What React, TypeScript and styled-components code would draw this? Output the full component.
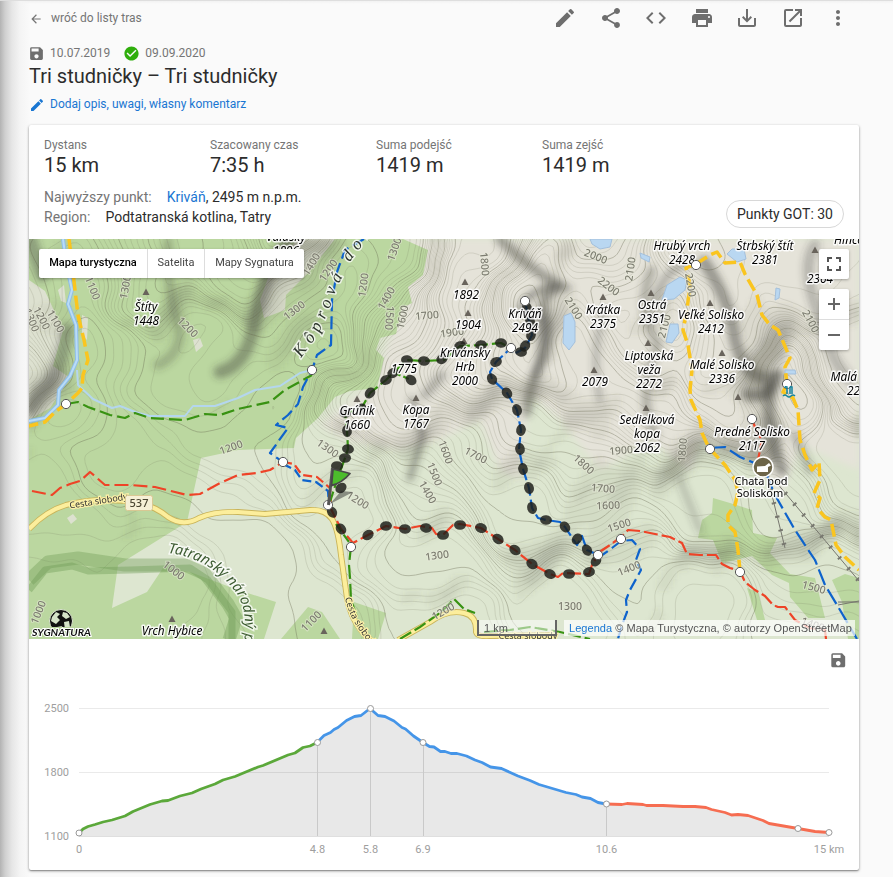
import React from "react";
import styled, { createGlobalStyle } from "styled-components";
import {
  MdArrowBack,
  MdCheckCircle,
  MdCode,
  MdEdit,
  MdMoreVert,
  MdOpenInNew,
  MdPrint,
  MdSave,
  MdSaveAlt,
  MdShare,
} from "react-icons/md";

const GlobalStyle = createGlobalStyle`
  * {
    box-sizing: border-box;
  }
  body {
    margin: 0;
    background: #fafafa;
    font-family: Roboto, sans-serif;
    color: #2c2c2c;
    overflow: hidden;
  }
`;

const Page = styled.div`
  height: 877px;
  padding: 5px 34px 0 29px;
  border-top: 1px solid #dedede;
  background: linear-gradient(
      90deg,
      #b3b3b3 0,
      #cfcfcf 5px,
      #e6e6e6 12px,
      #f4f4f4 20px,
      rgba(250, 250, 250, 0) 30px
    ),
    linear-gradient(#f2f2f2, #fafafa 3px);
`;

const TopBar = styled.header`
  display: flex;
  align-items: center;
  justify-content: space-between;
  height: 24px;
`;

const BackLink = styled.a`
  display: flex;
  align-items: center;
  gap: 8px;
  font-size: 12px;
  color: #757575;

  svg {
    font-size: 14px;
    position: relative;
    top: 1px;
  }
`;

const Actions = styled.div`
  display: flex;
  gap: 21.5px;
  margin-right: 9px;
  font-size: 24px;
  color: #6e6e6e;

  svg {
    display: block;
  }
`;

const Dates = styled.div`
  display: flex;
  align-items: center;
  height: 20px;
  margin-top: 13px;
  margin-left: -1px;
  font-size: 12px;
  color: #757575;
`;

const DateItem = styled.span<{ iconColor: string }>`
  display: flex;
  align-items: center;
  gap: 5px;
  margin-right: 13px;

  svg {
    font-size: 17px;
    color: ${(props) => props.iconColor};
  }
`;

const RouteTitle = styled.h1`
  margin: 1px 0 0;
  font-size: 20px;
  font-weight: 400;
  line-height: 24px;
`;

const NoteLink = styled.a`
  display: flex;
  align-items: center;
  gap: 5px;
  height: 20px;
  margin-top: 6px;
  font-size: 12px;
  color: #1976d2;

  svg {
    font-size: 16px;
    position: relative;
    top: 1px;
  }
`;

const Card = styled.section`
  display: flex;
  flex-direction: column;
  width: 830px;
  height: 745px;
  margin-top: 11px;
  background: #fff;
  border-radius: 2px;
  box-shadow: 0 1px 3px rgba(0, 0, 0, 0.4), 0 1px 1px rgba(0, 0, 0, 0.2);
`;

const Summary = styled.div`
  height: 114px;
  padding: 11px 15px 0;
`;

const Stats = styled.div`
  display: grid;
  grid-template-columns: repeat(5, 166px);
`;

const StatLabel = styled.div`
  font-size: 12px;
  line-height: 18px;
  color: #757575;
`;

const StatValue = styled.div`
  font-size: 20px;
  line-height: 23px;
`;

const Details = styled.div`
  display: flex;
  justify-content: space-between;
  align-items: flex-end;
  margin-top: 10px;
`;

const Detail = styled.div`
  font-size: 14px;
  line-height: 20px;
`;

const DetailLabel = styled.span`
  color: #757575;
  margin-right: 15px;
`;

const PeakLink = styled.a`
  color: #1976d2;
`;

const Chip = styled.div`
  height: 28px;
  padding: 0 10px;
  margin-bottom: -1px;
  border: 1px solid #d8d8d8;
  border-radius: 14px;
  font-size: 14px;
  line-height: 26px;
`;

const MapFrame = styled.div`
  position: relative;
  height: 400px;
  overflow: hidden;
`;

const Drawing = styled.svg`
  display: block;
`;

const MapTypes = styled.div`
  position: absolute;
  left: 10px;
  top: 10px;
  display: flex;
  height: 29px;
  border-radius: 2px;
  background: #fff;
  box-shadow: 0 1px 3px rgba(0, 0, 0, 0.3);
`;

const MapType = styled.div<{ width: number; active?: boolean }>`
  width: ${(props) => props.width}px;
  font-size: 11px;
  font-weight: ${(props) => (props.active ? 500 : 400)};
  color: ${(props) => (props.active ? "#000" : "#444")};
  line-height: 27px;
  text-align: center;

  & + & {
    border-left: 1px solid #ddd;
  }
`;

const MapButtons = styled.div`
  position: absolute;
  right: 10px;
  top: 10px;
  display: flex;
  flex-direction: column;
  gap: 10px;
`;

const ButtonStack = styled.div`
  width: 30px;
  border-radius: 2px;
  background: #fff;
  box-shadow: 0 1px 3px rgba(0, 0, 0, 0.3);
`;

const MapButton = styled.div`
  display: flex;
  align-items: center;
  justify-content: center;
  height: 30px;

  & + & {
    height: 31px;
    border-top: 1px solid #ddd;
  }
`;

const MapFooter = styled.div`
  position: absolute;
  right: 4px;
  bottom: 3px;
  display: flex;
  gap: 7px;
  font-family: "Liberation Sans", Arial, sans-serif;
  font-size: 11px;
  line-height: 16px;
  color: #555;
`;

const Scale = styled.div`
  width: 80px;
  height: 16px;
  padding-left: 5px;
  border: 2px solid #666;
  border-top: 0;
  background: rgba(255, 255, 255, 0.5);
`;

const Credits = styled.div`
  height: 16px;
  width: 291px;
  padding-left: 5px;
  background: rgba(255, 255, 255, 0.7);
  letter-spacing: 0.05px;
  white-space: nowrap;
`;

const Profile = styled.div`
  display: flex;
  flex-direction: column;
  height: 231px;
`;

const ProfileHeader = styled.div`
  display: flex;
  justify-content: flex-end;
  height: 40px;
  padding: 12px 12px 0 0;
  font-size: 18.5px;
  color: #6e6e6e;
`;

type Point = [number, number];

const parse = (line: string): Point[] =>
  line.split(" ").map((pair) => pair.split(",").map(Number) as Point);

// ---- terrain ---------------------------------------------------------

const LEFT = 29;
const TOP = 239;
const STEP = 4;
const COLS = Math.ceil(830 / STEP) + 1;
const ROWS = Math.ceil(400 / STEP) + 1;

// x, y, metres above sea level
const elevations = [
  [147, 290, 1450], [93, 290, 1100], [125, 288, 1300], [188, 328, 1200],
  [32, 320, 1350], [44, 318, 1200], [56, 320, 1100], [75, 340, 985],
  [29, 370, 1450], [66, 404, 1000], [200, 260, 1500], [240, 270, 1560],
  [287, 245, 1896], [311, 265, 1400], [328, 270, 1200], [295, 310, 1300],
  [225, 370, 1260], [330, 340, 1110], [363, 285, 1200], [394, 253, 1300],
  [386, 298, 1400], [395, 318, 1530], [427, 315, 1700], [465, 285, 1892],
  [468, 318, 1904], [486, 265, 1800], [522, 305, 2480], [545, 280, 2300],
  [540, 350, 2250], [505, 350, 2130], [455, 365, 2000], [358, 405, 1660],
  [416, 405, 1767], [404, 362, 1775], [596, 256, 2000], [630, 268, 2100],
  [609, 286, 2200], [575, 308, 2100], [568, 335, 1950], [603, 302, 2375],
  [594, 375, 2079], [651, 295, 2351], [649, 345, 2272], [646, 415, 2062],
  [710, 308, 2412], [722, 360, 2336], [738, 400, 2217], [765, 245, 2381],
  [690, 250, 2428], [675, 320, 1950], [785, 390, 1750], [820, 270, 2364],
  [850, 370, 2229], [814, 587, 1500], [810, 625, 1400], [618, 525, 1500],
  [628, 568, 1400], [568, 605, 1300], [608, 504, 1600], [603, 488, 1700],
  [584, 465, 1800], [621, 450, 1900], [475, 455, 1700], [448, 455, 1600],
  [435, 475, 1500], [428, 492, 1400], [437, 555, 1300], [358, 499, 1200],
  [231, 447, 1200], [328, 450, 1300], [310, 625, 1100], [173, 570, 1000],
  [37, 610, 1000], [450, 625, 1200], [45, 500, 1040], [200, 500, 1100],
  [100, 450, 1130], [120, 610, 1020], [250, 560, 1090], [700, 600, 1330],
  [700, 500, 1640], [780, 500, 1720], [840, 470, 1950], [520, 430, 1850],
  [520, 500, 1600], [110, 360, 1130], [160, 370, 1230], [270, 400, 1170],
];

const elevationAt = (x: number, y: number) => {
  const wx = x + 4 * Math.sin(y / 13 + x / 47) + 1.5 * Math.sin(y / 6 - x / 19);
  const wy = y + 4 * Math.sin(x / 15 - y / 53) + 1.5 * Math.cos(x / 7 + y / 17);
  let sum = 0;
  let weights = 0;
  for (const [px, py, h] of elevations) {
    const d = (px - wx) ** 2 + (py - wy) ** 2;
    const w = Math.exp(-d / 900) + 0.02 * Math.exp(-d / 6000) + 1e-7;
    sum += w * h;
    weights += w;
  }
  return sum / weights;
};

const grid: number[][] = [];
for (let r = 0; r < ROWS; r++) {
  grid.push([]);
  for (let c = 0; c < COLS; c++) {
    grid[r].push(elevationAt(LEFT + c * STEP, TOP + r * STEP));
  }
}

// marching squares, one path for all lines of the given interval
const contourPath = (interval: number, skip?: number) => {
  let d = "";
  for (let r = 0; r < ROWS - 1; r++) {
    for (let c = 0; c < COLS - 1; c++) {
      const x = LEFT + c * STEP;
      const y = TOP + r * STEP;
      const corners = [
        [x, y, grid[r][c]],
        [x + STEP, y, grid[r][c + 1]],
        [x + STEP, y + STEP, grid[r + 1][c + 1]],
        [x, y + STEP, grid[r + 1][c]],
      ];
      const heights = corners.map((corner) => corner[2]);
      const max = Math.max(...heights);
      let level = Math.ceil(Math.min(...heights) / interval) * interval;
      for (; level < max; level += interval) {
        if (skip && level % skip === 0) continue;
        const hits: string[] = [];
        for (let i = 0; i < 4; i++) {
          const a = corners[i];
          const b = corners[(i + 1) % 4];
          if (a[2] < level !== b[2] < level) {
            const t = (level - a[2]) / (b[2] - a[2]);
            const hx = a[0] + t * (b[0] - a[0]);
            const hy = a[1] + t * (b[1] - a[1]);
            hits.push(`${hx.toFixed(1)} ${hy.toFixed(1)}`);
          }
        }
        if (hits.length >= 2) d += `M${hits[0]}L${hits[1]}`;
      }
    }
  }
  return d;
};

const minorContours = contourPath(20, 100);
const majorContours = contourPath(100);

// slopes that face away from the north-west light
const shadeLevels = [12, 22, 34, 48, 62].map((limit) => {
  let d = "";
  for (let r = 0; r < ROWS - 1; r++) {
    for (let c = 0; c < COLS - 1; c++) {
      const fall = 2 * grid[r][c] - grid[r][c + 1] - grid[r + 1][c];
      if (fall > limit) {
        d += `M${LEFT + c * STEP} ${TOP + r * STEP}h${STEP}v${STEP}h-${STEP}z`;
      }
    }
  }
  return d;
});

const forests = [
  "29,239 403,239 428,250 423,275 408,287 412,303 402,308 396,334 380,338 376,350 384,358 377,388 350,391 335,397 318,418 296,438 294,448 238,450 201,458 187,522 118,565 112,608 147,592 163,568 190,572 238,590 276,602 264,639 29,639",
  "308,607 322,612 340,639 281,639",
  "354,602 386,613 378,639 352,639",
  "713,498 730,503 752,510 753,533 777,538 770,553 790,574 815,578 825,618 808,618 790,597 789,583 772,575 752,556 722,563 713,540 698,538 702,520 712,513",
  "747,588 758,592 765,620 757,620",
  "832,580 845,574 859,578 859,639 848,639 842,602",
];

const clearings = [
  "29,280 45,291 63,330 53,366 70,378 50,408 29,420",
  "260,300 272,267 298,239 335,239 309,272 286,295 285,310 264,318",
  "58,290 64,285 66,303 61,301",
  "82,315 88,318 87,340 82,335",
  "193,340 200,338 203,346 196,352",
  "67,518 73,514 77,519 71,524",
];

const ridges = [
  { d: "M500 239 Q530 270 562 287 Q538 295 545 315 Q553 340 540 365 Q530 385 527 412", w: 10, o: 0.42 },
  { d: "M558 286 Q530 288 520 310", w: 7, o: 0.45 },
  { d: "M540 315 Q548 340 535 375", w: 8, o: 0.35 },
  { d: "M290 239 Q265 270 255 320 Q248 365 220 372", w: 13, o: 0.42 },
  { d: "M168 242 Q166 290 180 330 Q180 355 158 365", w: 10, o: 0.26 },
  { d: "M30 239 L42 275", w: 14, o: 0.36 },
  { d: "M67 330 Q64 360 48 385 L29 408", w: 14, o: 0.36 },
  { d: "M412 400 L423 435 L410 478", w: 7, o: 0.42 },
  { d: "M425 395 L442 375", w: 9, o: 0.3 },
  { d: "M652 270 Q635 305 658 345 Q636 395 655 435", w: 9, o: 0.32 },
  { d: "M605 310 Q590 350 600 400", w: 7, o: 0.28 },
  { d: "M690 262 Q665 268 655 300", w: 8, o: 0.3 },
  { d: "M704 262 Q730 300 735 340 Q745 380 770 378 Q765 430 782 470", w: 12, o: 0.45 },
  { d: "M748 395 Q770 400 778 375", w: 12, o: 0.5 },
  { d: "M815 245 Q798 270 825 330 Q830 360 850 380", w: 11, o: 0.28 },
  { d: "M795 435 L810 470", w: 8, o: 0.32 },
  { d: "M680 480 L700 530", w: 8, o: 0.2 },
];

const lakes = [
  "564,316 571,313 575,322 575,342 569,350 563,343",
  "590,239 612,239 610,247 600,249 592,244",
  "662,300 667,285 680,277 687,280 685,290 674,299",
  "666,342 670,324 678,324 679,333 672,343",
  "727,254 732,249 744,249 746,259 737,262",
  "775,300 776,288 780,289 779,298",
  "785,370 795,370 796,374 785,374",
  "640,253 650,257 649,262 641,258",
];

type Trail = { color: string; width?: number; dash: string; points: string };

const yellow = "#fac51f";
const blue = "#0e63cc";
const red = "#ee4327";
const green = "#389212";

const trails: Trail[] = [
  { color: yellow, width: 3.5, dash: "14 5", points: "69,239 72,263 75,290 78,315 84,340 88,360 83,375 82,388 78,393 66,404 55,412 45,422 29,426" },
  { color: green, dash: "13 5", points: "66,404 78,402 88,407 110,415 125,418 135,413 150,418 185,420 205,414 220,415 238,409 270,402 285,390 312,375" },
  { color: blue, dash: "13 5", points: "364,239 345,250 337,272 332,300 331,345 317,355 312,370 303,387 298,404 288,415 276,425 288,428 270,453 283,462" },
  { color: blue, dash: "9 4", points: "283,464 295,470 302,480 316,482 328,491 329,505" },
  { color: red, dash: "14 5", points: "32,491 52,495 60,488 70,484 80,481 90,472 97,478 105,485 130,485 155,487 187,495 200,494 220,483 238,475 257,473 270,470 283,462" },
  { color: red, dash: "9 4", points: "283,462 294,464 302,475 317,477 330,488 331,505" },
  { color: green, dash: "14 4", points: "329,505 337,480 345,458 348,449 347,431 345,413 361,409 370,393 386,380 393,373 407,360 424,361 444,360 460,346 481,345 501,343 511,348" },
  { color: green, dash: "6 3", points: "395,373 411,380" },
  { color: blue, dash: "12 4", points: "525,301 529,320 532,335 525,348 514,354 511,348 496,362 490,372 492,379 507,393 517,410 521,430 519,449 523,469 529,488 532,508 538,518 546,520 560,522 565,527 577,545 582,536 587,550 598,555" },
  { color: red, dash: "14 4", points: "329,505 341,529 353,543 368,535 386,526 405,529 420,526 432,528 436,534 443,535 453,525 460,524 481,528 498,539 515,550 532,564 550,574 558,577 563,573 589,574 592,565 598,555" },
  { color: green, dash: "9 4", points: "336,524 349,542" },
  { color: red, dash: "14 4", points: "598,553 610,545 621,537 628,530 640,531 655,534 670,537 682,543 687,554 700,555 716,555 722,564 730,568 740,571 745,582 755,590 765,596 773,605 778,607 785,607 795,620 810,628 825,630 826,639" },
  { color: blue, dash: "12 5", points: "598,558 612,548 621,541 632,540 640,549 636,560 641,570 630,590 626,600 627,612 622,625 618,639" },
  { color: green, dash: "14 5", points: "351,546 349,565 350,578 351,600 358,620" },
  { color: green, dash: "13 4", points: "400,639 420,627 440,613 454,599 464,609 475,613" },
  { color: green, dash: "13 4", points: "484,632 510,630 530,627 560,632 590,639" },
  { color: blue, dash: "17 5", points: "709,448 725,447 740,457 752,462 764,468 775,495 795,530 815,560 825,585 840,610 857,639" },
  { color: red, dash: "9 3", points: "752,419 756,430 762,440 758,460" },
  { color: yellow, width: 3.5, dash: "13 5", points: "696,264 686,268 690,285 687,310 683,330 688,345 692,370 690,390 691,400 700,420 702,433 709,448 725,465 735,480 738,492 735,505 728,515 728,525 735,532 738,550 740,571" },
  { color: yellow, width: 3.5, dash: "13 5", points: "696,264 710,255 717,252 725,263 740,262 745,274 757,295 762,315 770,325 778,330 790,358 785,367 787,384" },
  { color: yellow, width: 3.5, dash: "13 5", points: "787,384 783,392 793,398 798,410 800,440 805,455 812,470 819,462 820,480 814,493 820,498 817,508 825,517 831,520 836,545 845,557 859,570" },
];

// x, y, tilt
const beads = [
  [348, 449, 10], [345, 458, 0], [337, 466, 0], [341, 488, -40], [332, 512, 60],
  [341, 529, 50], [368, 535, -35], [386, 526, -5], [405, 529, 5], [426, 528, 10],
  [443, 535, 0], [460, 525, 0], [481, 528, 15], [498, 539, 35], [515, 550, 35],
  [532, 564, 35], [550, 574, 25], [569, 574, 0], [589, 572, -15], [596, 561, -50],
  [587, 550, 60], [577, 539, -50], [565, 527, 50], [546, 520, 5], [532, 508, 70],
  [529, 488, 70], [523, 469, 80], [520, 449, 80], [521, 430, 100], [517, 410, 70],
  [507, 393, 50], [492, 379, 60], [496, 362, -20], [521, 352, 10], [525, 346, -55],
  [531, 335, 100], [530, 321, 70], [527, 308, 70], [501, 343, 5], [481, 345, -5],
  [460, 346, -20], [442, 359, -30], [424, 361, 5], [407, 360, 10], [411, 380, 40],
  [393, 373, -30], [386, 380, -20], [370, 393, -50], [361, 409, -50], [345, 413, 10],
  [347, 431, 80],
];

const junctions = [
  [66, 404], [312, 370], [283, 462], [351, 547], [511, 348], [525, 301],
  [598, 555], [621, 539], [696, 265], [787, 384], [752, 419], [710, 449], [740, 572],
];

// x, first baseline, lines
const placeNames: [number, number, string[]][] = [
  [146, 311, ["Štíty", "1448"]],
  [286, 241, ["Valušky", "1896"]],
  [466, 299, ["1892"]],
  [468, 329, ["1904"]],
  [404, 373, ["1775"]],
  [357, 415, ["Grúnik", "1660"]],
  [416, 414, ["Kopa", "1767"]],
  [465, 357, ["Krivánsky", "Hrb", "2000"]],
  [525, 318, ["Kriváň", "2494"]],
  [603, 314, ["Krátka", "2375"]],
  [595, 386, ["2079"]],
  [652, 309, ["Ostrá", "2351"]],
  [649, 360, ["Liptovská", "veža", "2272"]],
  [647, 424, ["Sedielková", "kopa", "2062"]],
  [682, 250, ["Hrubý vrch", "2428"]],
  [765, 250, ["Štrbský štít", "2381"]],
  [711, 319, ["Veľké Solisko", "2412"]],
  [722, 369, ["Malé Solisko", "2336"]],
  [752, 436, ["Predné Solisko", "2117"]],
  [855, 244, ["Hincova"]],
  [820, 283, ["2364"]],
  [860, 381, ["Malá Bašta", "2229"]],
  [172, 635, ["Vrch Hybice"]],
];

const summits = [
  [146, 292], [357, 399], [416, 398], [465, 282], [468, 313], [464, 341],
  [603, 297], [594, 370], [651, 293], [648, 343], [646, 408], [710, 303],
  [722, 353], [738, 397], [815, 250], [172, 619], [324, 631],
];

// x, y, rotation, text
const contourLabels: [number, number, number, string][] = [
  [93, 288, 68, "1100"], [125, 287, -80, "1300"], [188, 327, 45, "1200"],
  [32, 320, 68, "1300"], [42, 318, 62, "1200"], [56, 321, 60, "1100"],
  [311, 264, -58, "1400"], [328, 270, -55, "1200"], [294, 310, -38, "1300"],
  [363, 285, -82, "1200"], [394, 249, -70, "1300"], [386, 298, -60, "1400"],
  [390, 318, 95, "1500"], [402, 317, -78, "1600"], [427, 315, -5, "1700"],
  [452, 332, -8, "1900"], [485, 264, 85, "1800"], [596, 256, 22, "2000"],
  [630, 269, -82, "2100"], [609, 286, 38, "2200"], [574, 308, 58, "2100"],
  [691, 285, 80, "2200"], [664, 326, -75, "2100"], [811, 321, 62, "2100"],
  [231, 447, -20, "1200"], [328, 448, 35, "1300"], [358, 500, 32, "1200"],
  [446, 452, 70, "1600"], [476, 455, 28, "1700"], [435, 474, 68, "1500"],
  [428, 492, 60, "1400"], [437, 555, -8, "1300"], [584, 464, 42, "1800"],
  [621, 450, -5, "1900"], [603, 488, 5, "1700"], [608, 505, -2, "1600"],
  [619, 525, -18, "1500"], [629, 568, -22, "1400"], [570, 606, 0, "1300"],
  [682, 450, -85, "1800"], [814, 587, 15, "1500"], [813, 624, 20, "1400"],
  [174, 570, 38, "1000"], [38, 612, -68, "1000"], [311, 621, -45, "1100"],
  [443, 611, -30, "1200"],
];

const Contour = styled.text`
  font: 500 10.5px "Noto Sans", sans-serif;
  fill: #7c7c70;
  text-anchor: middle;
  paint-order: stroke;
  stroke: rgba(235, 238, 222, 0.5);
  stroke-width: 2px;
`;

const PlaceName = styled.text<{ size?: number; upright?: boolean }>`
  font-family: "Noto Sans", sans-serif;
  font-size: ${(props) => props.size || 11.8}px;
  font-style: ${(props) => (props.upright ? "normal" : "italic")};
  fill: #000;
  text-anchor: middle;
  paint-order: stroke;
  stroke: rgba(255, 255, 255, 0.85);
  stroke-width: 3px;
  stroke-linejoin: round;
`;

const RoadNumber = styled.text`
  font: 500 11px "Noto Sans", sans-serif;
  fill: #4b4632;
  text-anchor: middle;
`;

const CurvedName = styled.text<{ serif?: boolean }>`
  font-family: ${(props) =>
    props.serif ? `"Liberation Serif", serif` : `"Noto Sans", sans-serif`};
  font-size: ${(props) => (props.serif ? 17 : 14.5)}px;
  font-style: italic;
  letter-spacing: ${(props) => (props.serif ? 5.6 : 0)}px;
  fill: ${(props) => (props.serif ? "#2b332b" : "#3b5a30")};
  paint-order: stroke;
  stroke: rgba(255, 255, 255, 0.75);
  stroke-width: 3px;
`;

const RoadName = styled.text<{ anchor?: string }>`
  font: 9px "Noto Sans", sans-serif;
  fill: #333;
  text-anchor: ${(props) => props.anchor || "middle"};
  paint-order: stroke;
  stroke: #fbf0a8;
  stroke-width: 2.5px;
`;

const Brand = styled.text`
  font: italic 700 10px Lato, sans-serif;
  fill: #111;
  paint-order: stroke;
  stroke: #fff;
  stroke-width: 2px;
`;

function Terrain() {
  return (
    <>
      <rect x="29" y="239" width="830" height="400" fill="#dde6d0" />
      <path
        d="M395 239H859V470L800 445L780 500L760 460L700 440L690 470L650 440L600 470L560 420L530 395L520 480L500 470L480 420L440 440L400 450L345 440L320 425L375 380L395 320Z"
        fill="#e5e3d9"
        filter="url(#soft)"
      />
      {forests.map((points) => (
        <polygon key={points} points={points} fill="#bbd7a0" />
      ))}
      {clearings.map((points) => (
        <polygon key={points} points={points} fill="#dde1d0" />
      ))}
      <g filter="url(#relief)">
        {shadeLevels.map((d, i) => (
          <path key={i} d={d} fill="#4c4c45" opacity={0.075} />
        ))}
      </g>
      <g filter="url(#soft)" fill="none" stroke="#3c3c38" strokeLinecap="round">
        {ridges.map((ridge) => (
          <path key={ridge.d} d={ridge.d} strokeWidth={ridge.w} opacity={ridge.o} />
        ))}
      </g>
      <path d={minorContours} stroke="#6d6d58" strokeWidth="0.7" opacity="0.24" />
      <path d={majorContours} stroke="#66664f" strokeWidth="1" opacity="0.36" />
      <g fill="none" stroke="#6f9a55" strokeLinejoin="round">
        <path
          d="M29 580L48 562L78 558L125 565H185L205 574L228 604L236 618L229 640"
          strokeWidth="13"
          opacity="0.38"
        />
        <path
          d="M29 590L45 570L72 566L88 571L130 570L190 568L208 580L232 612V640"
          strokeWidth="7"
          opacity="0.4"
        />
      </g>
    </>
  );
}

const river =
  "M63 239L66 262L72 290L68 304L76 325L77 360L70 376L59 390L58 405L45 418L29 421";

function Waters() {
  return (
    <g stroke="#a3bfdb" strokeLinejoin="round">
      {lakes.map((points) => (
        <polygon key={points} points={points} fill="#b9d7f1" strokeWidth="1" />
      ))}
      <path d={river} fill="none" stroke="#8fbee8" strokeWidth="4" />
      <path d={river} fill="none" stroke="#b9dcf8" strokeWidth="2" />
      <path
        d="M77 370L78 385L93 399L112 408L120 406L135 412L150 416H185L193 406L215 406L238 398L255 390L280 386L300 373L312 370"
        fill="none"
        stroke="#b4d6ee"
        strokeWidth="2"
      />
    </g>
  );
}

const roads = [
  "M29 529Q46 511 66 505Q100 496 140 503Q156 507 168 517Q183 527 199 518Q215 511 238 512L265 514L310 510Q325 509 332 519Q338 528 341 555L347 598Q352 625 371 640",
  "M398 640L430 622Q448 609 464 613Q477 616 476 632Q477 637 490 636L550 635",
];

const lifts = "M767 475L785 548M776 482L859 581";

function Roads() {
  return (
    <g fill="none">
      {roads.map((d) => (
        <path key={d} d={d} stroke="#c9b45a" strokeWidth="6" />
      ))}
      {roads.map((d) => (
        <path key={d} d={d} stroke="#fcee9c" strokeWidth="4.2" />
      ))}
      <g stroke="#77776f" strokeWidth="1">
        <path d={lifts} />
        <path d={lifts} strokeWidth="4.5" strokeDasharray="2 12" />
        <path d="M838 602H859M838 605L859 601" />
      </g>
    </g>
  );
}

function Trails() {
  return (
    <g fill="none" strokeLinejoin="round">
      {trails.map((trail) => (
        <polyline
          key={trail.points}
          points={trail.points}
          stroke={trail.color}
          strokeWidth={trail.width || 2.2}
          strokeDasharray={trail.dash}
        />
      ))}
    </g>
  );
}

function Labels() {
  return (
    <>
      {contourLabels.map(([x, y, angle, label]) => (
        <Contour key={`${x}-${y}`} transform={`translate(${x} ${y}) rotate(${angle})`} y="4">
          {label}
        </Contour>
      ))}
      {summits.map(([x, y]) => (
        <path key={`${x}-${y}`} d={`M${x - 3.5} ${y + 3}h7l-3.5-6.5z`} fill="#69645c" />
      ))}
      <path id="valley" d="M301 358L319 333L329 310L337 287L352 259L372 232" fill="none" />
      <CurvedName serif>
        <textPath href="#valley">Kôprová dolina</textPath>
      </CurvedName>
      <path id="park" d="M168 553Q209 558 234 590Q252 611 241 660" fill="none" />
      <CurvedName>
        <textPath href="#park">Tatranský národný park</textPath>
      </CurvedName>
      <RoadName transform="translate(99 504) rotate(-9)">Cesta slobody</RoadName>
      <path id="road" d="M345 598Q350 622 372 646" fill="none" />
      <RoadName anchor="start">
        <textPath href="#road">Cesta slobody</textPath>
      </RoadName>
      <RoadName x="528" y="639">Cesta slobody</RoadName>
      <rect x="125.5" y="495.5" width="27" height="15" rx="2" fill="#f6f0d6" stroke="#d8c893" />
      <RoadNumber x="139" y="507">537</RoadNumber>
    </>
  );
}

function Markers() {
  return (
    <>
      {beads.map(([x, y, tilt]) => (
        <ellipse
          key={`${x}-${y}`}
          rx="6"
          ry="4.8"
          fill="#1e1f1a"
          opacity="0.84"
          transform={`translate(${x} ${y}) rotate(${tilt})`}
        />
      ))}
      {placeNames.map(([x, y, lines]) =>
        lines.map((line, i) => (
          <PlaceName key={`${x}-${line}`} x={x} y={y + i * 14}>
            {line}
          </PlaceName>
        ))
      )}
      {junctions.map(([x, y]) => (
        <circle key={`${x}-${y}`} cx={x} cy={y} r="4.6" fill="#fff" stroke="#555" />
      ))}
      <circle cx="328" cy="505" r="4.6" fill="#fff" stroke="#666" />
      <path d="M330 504L341 491L353 492Z" fill="#222" opacity="0.45" />
      <path d="M332.500 468L328.500 505" stroke="#555" strokeWidth="3" />
      <path
        d="M333 469L350 473.500Q342 483 331.500 485.500Z"
        fill="#4cbc2c"
        stroke="#484848"
        strokeWidth="1.8"
        strokeLinejoin="round"
      />
      <circle cx="763" cy="467" r="10" fill="#6d6549" stroke="#fff" strokeWidth="1.5" />
      <path d="M757 466.500L765 466L769 463L771 465.500L768 467V472H757Z" fill="#fff" />
      <PlaceName x="761" y="485" size={11} upright>Chata pod</PlaceName>
      <PlaceName x="760" y="497" size={11} upright>Soliskom</PlaceName>
      <path
        d="M785 388Q785 386 787 387V394M790 394V388Q790 386 792 387V394M783 396Q785 394 787 396T791 396T795 396"
        fill="none"
        stroke="#16839d"
        strokeWidth="1.5"
      />
    </>
  );
}

function SignaturaLogo() {
  return (
    <>
      <circle cx="61" cy="621" r="11.500" fill="#111" stroke="#dfe9d3" />
      <path
        d="M52 617L56 612L60 614L57 617L60 620L56 624L51 621ZM63 612L67 613L70 617L66 619L62 616ZM64 622L69 621L70 627L65 630ZM57 627L62 626L61 630Z"
        fill="#d5e3c8"
      />
      <path d="M48 627H76V634H48Z" fill="#bbd7a0" />
      <Brand x="32" y="636" textLength="59" lengthAdjust="spacingAndGlyphs">
        SYGNATURA
      </Brand>
    </>
  );
}

function TouristMap() {
  return (
    <MapFrame>
      <Drawing width="830" height="400" viewBox="29 239 830 400">
        <defs>
          <filter id="soft" x="-10%" y="-10%" width="120%" height="120%">
            <feGaussianBlur stdDeviation="3.6" />
          </filter>
          <filter id="relief">
            <feGaussianBlur stdDeviation="2.5" />
          </filter>
        </defs>
        <Terrain />
        <Waters />
        <Roads />
        <Trails />
        <Labels />
        <Markers />
        <SignaturaLogo />
      </Drawing>
      <MapTypes>
        <MapType width={108} active>Mapa turystyczna</MapType>
        <MapType width={57}>Satelita</MapType>
        <MapType width={100}>Mapy Sygnatura</MapType>
      </MapTypes>
      <MapButtons>
        <ButtonStack>
          <MapButton>
            <svg width="14" height="14" fill="none" stroke="#555" strokeWidth="2">
              <path d="M1 5V1H5M9 1H13V5M13 9V13H9M5 13H1V9" />
            </svg>
          </MapButton>
        </ButtonStack>
        <ButtonStack>
          <MapButton>
            <svg width="12" height="12" stroke="#666" strokeWidth="2">
              <path d="M0 6H12M6 0V12" />
            </svg>
          </MapButton>
          <MapButton>
            <svg width="12" height="12" stroke="#666" strokeWidth="2">
              <path d="M0 6H12" />
            </svg>
          </MapButton>
        </ButtonStack>
      </MapButtons>
      <MapFooter>
        <Scale>1 km</Scale>
        <Credits>
          <PeakLink>Legenda</PeakLink> © Mapa Turystyczna, © autorzy OpenStreetMap
        </Credits>
      </MapFooter>
    </MapFrame>
  );
}

// ---- elevation profile -------------------------------------------------

const profile = [
  {
    color: "#5ba83a",
    points:
      "79,833 83,829 88,826.5 95,824.5 103,822 112,820 125,816 133,811.5 150,804.5 162,801 168,800.5 180,796 192,793 201,789 215,784 223,780 235,776.5 258,767 263,765.5 288,755 295,753 303,747.5 310,746 317,742.5",
  },
  {
    color: "#4595e8",
    points:
      "317,742.5 324,735.5 330.5,732.5 334,729.5 338,727.5 346.5,720.5 354.5,716.5 361,715.5 370,708.5 378,715.5 385,716.5 394,721 402,727.5 405.5,729 413.5,736 423,742.5 429.5,746.5 434,747 440.5,751.5 445,751.5 451,753.5 457,753.5 466.5,756 475,760 482,762.5 490.5,767 501.5,768.5 518,776 530,780.5 539,784.5 566,792.5 576,794.5 582,797 590.5,798.5 598,802.5 606,804",
  },
  {
    color: "#f66d51",
    points:
      "606,804 622,804.5 627,803.5 643,804.5 646.5,805.5 663,805.5 683,806.5 695,806.5 706,807.5 711.5,809.5 725,812.5 731.5,815 738,814.5 748,815.5 763,820.5 769,823.5 798,828.5 815,831.5 829,832.5",
  },
];

const stops: [number, number, string][] = [
  [79, 833, "0"],
  [317.5, 742.5, "4.8"],
  [370.5, 708.5, "5.8"],
  [423, 742.5, "6.9"],
  [606.5, 804, "10.6"],
  [798, 828.5, ""],
  [829, 832.5, "15 km"],
];

const AxisLabel = styled.text<{ anchor: string }>`
  font-family: Roboto, sans-serif;
  font-size: 11px;
  fill: #9e9e9e;
  text-anchor: ${(props) => props.anchor};
`;

function ElevationProfile() {
  const outline = profile.flatMap((part) => parse(part.points));
  return (
    <Profile>
      <ProfileHeader>
        <MdSave />
      </ProfileHeader>
      <Drawing width="830" height="190" viewBox="29 679 830 190">
        <path d={`M79 836.500L${outline.join("L")}V836.500Z`} fill="#e8e8e8" />
        <path d="M79 708.500H829M79 772.500H829M79 836.500H829" stroke="#000" opacity="0.08" />
        {stops.slice(1, 5).map(([x, y]) => (
          <path key={x} d={`M${Math.floor(x) + 0.5} ${y}V836`} stroke="#c9c9c9" />
        ))}
        {profile.map((part) => (
          <polyline
            key={part.color}
            points={part.points}
            fill="none"
            stroke={part.color}
            strokeWidth="2.8"
            strokeLinejoin="round"
          />
        ))}
        {stops.map(([x, y, label]) => (
          <React.Fragment key={x}>
            <circle cx={x} cy={y} r="3" fill="#fff" stroke="#999" />
            <AxisLabel x={x} y="853" anchor="middle">
              {label}
            </AxisLabel>
          </React.Fragment>
        ))}
        <AxisLabel x="69" y="712" anchor="end">2500</AxisLabel>
        <AxisLabel x="69" y="776" anchor="end">1800</AxisLabel>
        <AxisLabel x="69" y="840" anchor="end">1100</AxisLabel>
      </Drawing>
    </Profile>
  );
}

const stats = [
  { label: "Dystans", value: "15 km" },
  { label: "Szacowany czas", value: "7:35 h" },
  { label: "Suma podejść", value: "1419 m" },
  { label: "Suma zejść", value: "1419 m" },
];

function App() {
  return (
    <Page>
      <GlobalStyle />
      <TopBar>
        <BackLink>
          <MdArrowBack />
          wróć do listy tras
        </BackLink>
        <Actions>
          <MdEdit />
          <MdShare />
          <MdCode />
          <MdPrint />
          <MdSaveAlt />
          <MdOpenInNew />
          <MdMoreVert />
        </Actions>
      </TopBar>
      <Dates>
        <DateItem iconColor="#6e6e6e">
          <MdSave />
          10.07.2019
        </DateItem>
        <DateItem iconColor="#2fae0c">
          <MdCheckCircle />
          09.09.2020
        </DateItem>
      </Dates>
      <RouteTitle>Tri studničky – Tri studničky</RouteTitle>
      <NoteLink>
        <MdEdit />
        Dodaj opis, uwagi, własny komentarz
      </NoteLink>
      <Card>
        <Summary>
          <Stats>
            {stats.map((stat) => (
              <div key={stat.label}>
                <StatLabel>{stat.label}</StatLabel>
                <StatValue>{stat.value}</StatValue>
              </div>
            ))}
          </Stats>
          <Details>
            <div>
              <Detail>
                <DetailLabel>Najwyższy punkt:</DetailLabel>
                <PeakLink>Kriváň</PeakLink>, 2495 m n.p.m.
              </Detail>
              <Detail>
                <DetailLabel>Region:</DetailLabel>
                Podtatranská kotlina, Tatry
              </Detail>
            </div>
            <Chip>Punkty GOT: 30</Chip>
          </Details>
        </Summary>
        <TouristMap />
        <ElevationProfile />
      </Card>
    </Page>
  );
}

export default App;
